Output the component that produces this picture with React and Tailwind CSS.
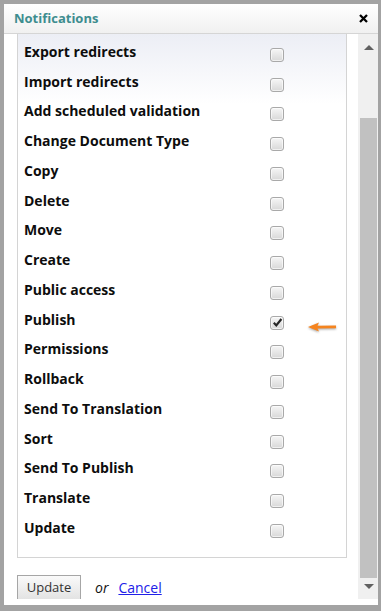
const permissions = [
  "Export redirects",
  "Import redirects",
  "Add scheduled validation",
  "Change Document Type",
  "Copy",
  "Delete",
  "Move",
  "Create",
  "Public access",
  "Publish",
  "Permissions",
  "Rollback",
  "Send To Translation",
  "Sort",
  "Send To Publish",
  "Translate",
  "Update",
];

function Checkbox({ checked }) {
  return (
    <span className="mt-[6px] flex h-[14px] w-[14px] shrink-0 items-center justify-center rounded-[3px] border border-[#a9a9a9] bg-linear-to-b from-[#f6f6f6] to-[#d8d8d8] shadow-[inset_0_0_0_1px_rgba(255,255,255,0.6)]">
      {checked && (
        <svg width="11" height="11" viewBox="0 0 11 11">
          <path d="M1.8 5.8 L4.3 8.4 L9.4 2" fill="none" stroke="#262626" strokeWidth="2.2" />
        </svg>
      )}
    </span>
  );
}

function Arrow() {
  return (
    <svg width="28" height="12" viewBox="0 0 28 12" className="ml-[24px] mt-[14px] drop-shadow-[0_1px_1px_rgba(0,0,0,0.35)]">
      <path d="M0 6 L11 1.5 L9.5 4.8 L28 4.6 L28 7.2 L9.5 7.4 L11 10.5 Z" fill="#f5841f" />
    </svg>
  );
}

function Triangle({ down }) {
  return (
    <svg width="10" height="5" viewBox="0 0 10 5">
      <path d={down ? "M0 0 L10 0 L5 5 Z" : "M5 0 L10 5 L0 5 Z"} fill="#616161" />
    </svg>
  );
}

export default function App() {
  return (
    <div className="h-[611px] w-[381px] bg-[#a3a3a3] pt-[4px] pl-[4px] pr-[3px] pb-[6px] font-['Open_Sans',sans-serif]">
      <div className="flex h-full flex-col bg-white">
        <div className="flex h-[30px] shrink-0 items-center justify-between border-b border-[#d5d5d5] bg-linear-to-b from-white to-[#f0f0f0] px-[10px]">
          <span className="text-[13px] font-bold text-[#3e8d8f]">Notifications</span>
          <svg width="9" height="9" viewBox="0 0 9 9">
            <path d="M1 1 L8 8 M8 1 L1 8" stroke="#000" strokeWidth="2.3" />
          </svg>
        </div>

        <div className="flex h-[565px] shrink-0">
          <div className="flex-1 overflow-hidden pl-[13px] pr-[11px]">
            <div className="border-x border-b border-[#d4d4d4] bg-[linear-gradient(to_bottom,#eceef5,#ffffff_70px)] pt-[3px] pb-[14px]">
              {permissions.map((name) => (
                <div key={name} className="flex h-[29.75px] items-center pl-[6px]">
                  <span className="w-[246px] shrink-0 text-[14px] font-bold leading-none text-[#0d0d0d]">{name}</span>
                  <Checkbox checked={name === "Publish"} />
                  {name === "Publish" && <Arrow />}
                </div>
              ))}
            </div>

            <div className="mt-[17px] flex items-center">
              <button className="h-[26px] w-[64px] border border-[#a6a6a6] bg-linear-to-b from-[#fafafa] to-[#e2e2e2] text-[13px] text-[#333]">
                Update
              </button>
              <span className="ml-[14px] text-[14px] italic text-[#111]">or</span>
              <a href="#" className="ml-[10px] text-[14px] text-[#2020e8] underline">
                Cancel
              </a>
            </div>
          </div>

          <div className="flex w-[20px] shrink-0 flex-col bg-[#f0f0f0]">
            <div className="flex h-[27px] items-center justify-center pl-[1px]">
              <Triangle />
            </div>
            <div className="h-[57px]" />
            <div className="ml-[2px] h-[460px] w-[17px] bg-[#c1c1c1]" />
            <div className="flex flex-1 justify-center pt-[6px] pl-[1px]">
              <Triangle down />
            </div>
          </div>
        </div>
      </div>
    </div>
  );
}
